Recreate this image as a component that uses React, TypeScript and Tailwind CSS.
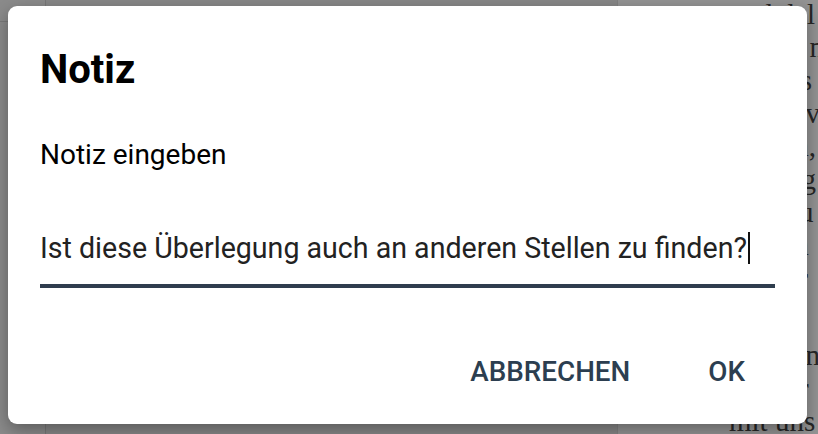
import React from "react";

const pageLines: { text: string; gapBefore?: boolean }[] = [
  { text: "und dal m" },
  { text: "wie es ne" },
  { text: "so dass m" },
  { text: "dann ev" },
  { text: "hat ihn," },
  { text: "als so g" },
  { text: "dass zu" },
  { text: "aber in" },
  { text: "wieder" },
  { text: "ist." },
  { text: "Dabei n", gapBefore: true },
  { text: "geht er" },
  { text: "mit uns" },
];

function BackgroundApp() {
  return (
    <div className="flex h-full w-full">
      {/* narrow tool column */}
      <div className="flex w-[46px] shrink-0 flex-col border-r border-[#cfcfcf] bg-[#efefef]">
        <div className="h-[22px] border-b border-[#d2d2d2]" />
      </div>
      {/* list panel */}
      <div className="w-[572px] shrink-0 border-r border-[#e0e0e0] bg-[#ebebeb]" />
      {/* reading page */}
      <div
        className="flex-1 overflow-hidden bg-white pl-[111px] text-[29px] leading-[33px] text-[#444]"
        style={{ fontFamily: '"Liberation Serif", serif' }}
      >
        <div className="-mt-[2px] flex flex-col">
          {pageLines.map((l, i) => (
            <div
              key={i}
              className={`whitespace-nowrap ${l.gapBefore ? "mt-[11px]" : ""}`}
            >
              {l.text}
            </div>
          ))}
        </div>
      </div>
    </div>
  );
}

export default function App() {
  return (
    <div
      className="relative h-[434px] w-[818px] overflow-hidden"
      style={{ fontFamily: 'Roboto, "Noto Sans", sans-serif' }}
    >
      <BackgroundApp />
      <div className="absolute inset-0 bg-black/[0.42]" />

      {/* note dialog */}
      <div className="absolute left-[8px] top-[6px] flex h-[418px] w-[799px] flex-col rounded-[9px] bg-white shadow-[0_6px_18px_rgba(0,0,0,0.35)]">
        <div className="px-[32px] pt-[44px]">
          <h2 className="text-[40px] font-bold leading-none text-black">Notiz</h2>
          <p className="mt-[51px] text-[28px] leading-none text-black">Notiz eingeben</p>
          <div className="mt-[63px] border-b-[4px] border-[#2f3d4e] pb-[20px]">
            <div className="flex items-center text-[28.6px] leading-none text-[#222]">
              <span>Ist diese Überlegung auch an anderen Stellen zu finden?</span>
              <span className="ml-[1px] h-[32px] w-[2px] bg-[#111]" />
            </div>
          </div>
        </div>
        <div className="mt-auto flex justify-end gap-[78px] pb-[38px] pr-[62px]">
          <button className="text-[27.8px] font-medium leading-none text-[#2c3e50]">
            ABBRECHEN
          </button>
          <button className="text-[27.8px] font-medium leading-none text-[#2c3e50]">
            OK
          </button>
        </div>
      </div>
    </div>
  );
}
